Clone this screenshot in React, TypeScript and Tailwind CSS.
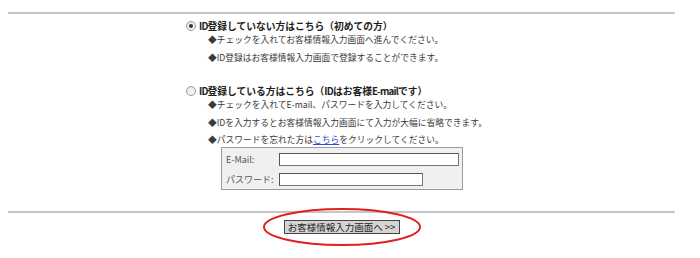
const font = { fontFamily: '"Noto Sans CJK JP", "Noto Sans", sans-serif' };

const Radio = ({ checked }: { checked?: boolean }) => (
  <span className="inline-flex h-[10px] w-[10px] shrink-0 items-center justify-center rounded-full border border-[#9a9a9a] bg-gradient-to-br from-[#e4e4e4] to-[#fafafa]">
    {checked && <span className="h-[4px] w-[4px] rounded-full bg-[#333]" />}
  </span>
);

const Bullet = ({ children, className = "" }: { children: React.ReactNode; className?: string }) => (
  <div className={`h-[14px] pl-[22px] text-[8.75px] leading-[14px] whitespace-nowrap text-[#3a3a3a] ${className}`}>
    ◆{children}
  </div>
);

const Heading = ({ checked, children, className = "" }: { checked?: boolean; children: React.ReactNode; className?: string }) => (
  <div className={`flex h-[14px] items-center gap-[3px] text-[9.75px] leading-[14px] font-bold whitespace-nowrap text-[#1e1e1e] ${className}`}>
    <Radio checked={checked} />
    <span>{children}</span>
  </div>
);

// narrower latin runs inside the bold headings
const Lat = ({ children }: { children: React.ReactNode }) => (
  <span className="tracking-[-0.8px]">{children}</span>
);

export default function App() {
  return (
    <div className="h-[258px] w-[700px] overflow-hidden bg-white" style={font}>
      <div className="ml-[8px] w-[667px] pt-[12px]">
        <div className="h-[2px] bg-[#c6c6c6]" />

        <div className="pl-[178px]">
          <Heading checked className="mt-[5px]">
            <Lat>ID</Lat>登録していない方はこちら（初めての方）
          </Heading>
          <Bullet>チェックを入れてお客様情報入力画面へ進んでください。</Bullet>
          <Bullet className="mt-[4px]">ID登録はお客様情報入力画面で登録することができます。</Bullet>

          <Heading className="mt-[19px]">
            <Lat>ID</Lat>登録している方はこちら（<Lat>ID</Lat>はお客様<Lat>E-mail</Lat>です）
          </Heading>
          <Bullet>チェックを入れてE-mail、パスワードを入力してください。</Bullet>
          <Bullet className="mt-[4px]">IDを入力するとお客様情報入力画面にて入力が大幅に省略できます。</Bullet>
          <Bullet className="mt-[3px]">
            パスワードを忘れた方は<span className="text-[#2a4fc8] underline">こちら</span>をクリックしてください。
          </Bullet>

          <div className="ml-[35px] flex w-[242px] flex-col gap-[7px] border border-[#9c9c9c] bg-[#f0f0f0] pt-[5px] pb-[3px] pl-[4px]">
            <div className="flex h-[13px] items-center">
              <span className="w-[53px] text-[9px] leading-[13px] text-[#555]">E-Mail:</span>
              <span className="h-[13px] w-[180px] border border-t-[#555] border-l-[#555] border-r-[#777] border-b-[#777] bg-white" />
            </div>
            <div className="flex h-[13px] items-center">
              <span className="w-[53px] text-[9px] leading-[13px] text-[#555]">パスワード:</span>
              <span className="h-[13px] w-[144px] border border-t-[#555] border-l-[#555] border-r-[#777] border-b-[#777] bg-white" />
            </div>
          </div>
        </div>

        <div className="mt-[21px] h-[2px] bg-[#c6c6c6]" />

        <div className="mt-[7px] flex justify-center">
          <div className="relative">
            <button className="flex h-[14px] w-[116px] items-center justify-center border border-[#444] bg-[#d4d4d4] text-[9.5px] leading-[12px] whitespace-nowrap text-[#222]">
              お客様情報入力画面へ &gt;&gt;
            </button>
            <svg
              className="pointer-events-none absolute top-1/2 left-1/2 h-[40px] w-[160px] -translate-x-1/2 -translate-y-1/2"
              viewBox="0 0 160 40"
            >
              <ellipse cx="80" cy="20" rx="78" ry="18" fill="none" stroke="#e0201f" strokeWidth="2" />
            </svg>
          </div>
        </div>
      </div>
    </div>
  );
}
